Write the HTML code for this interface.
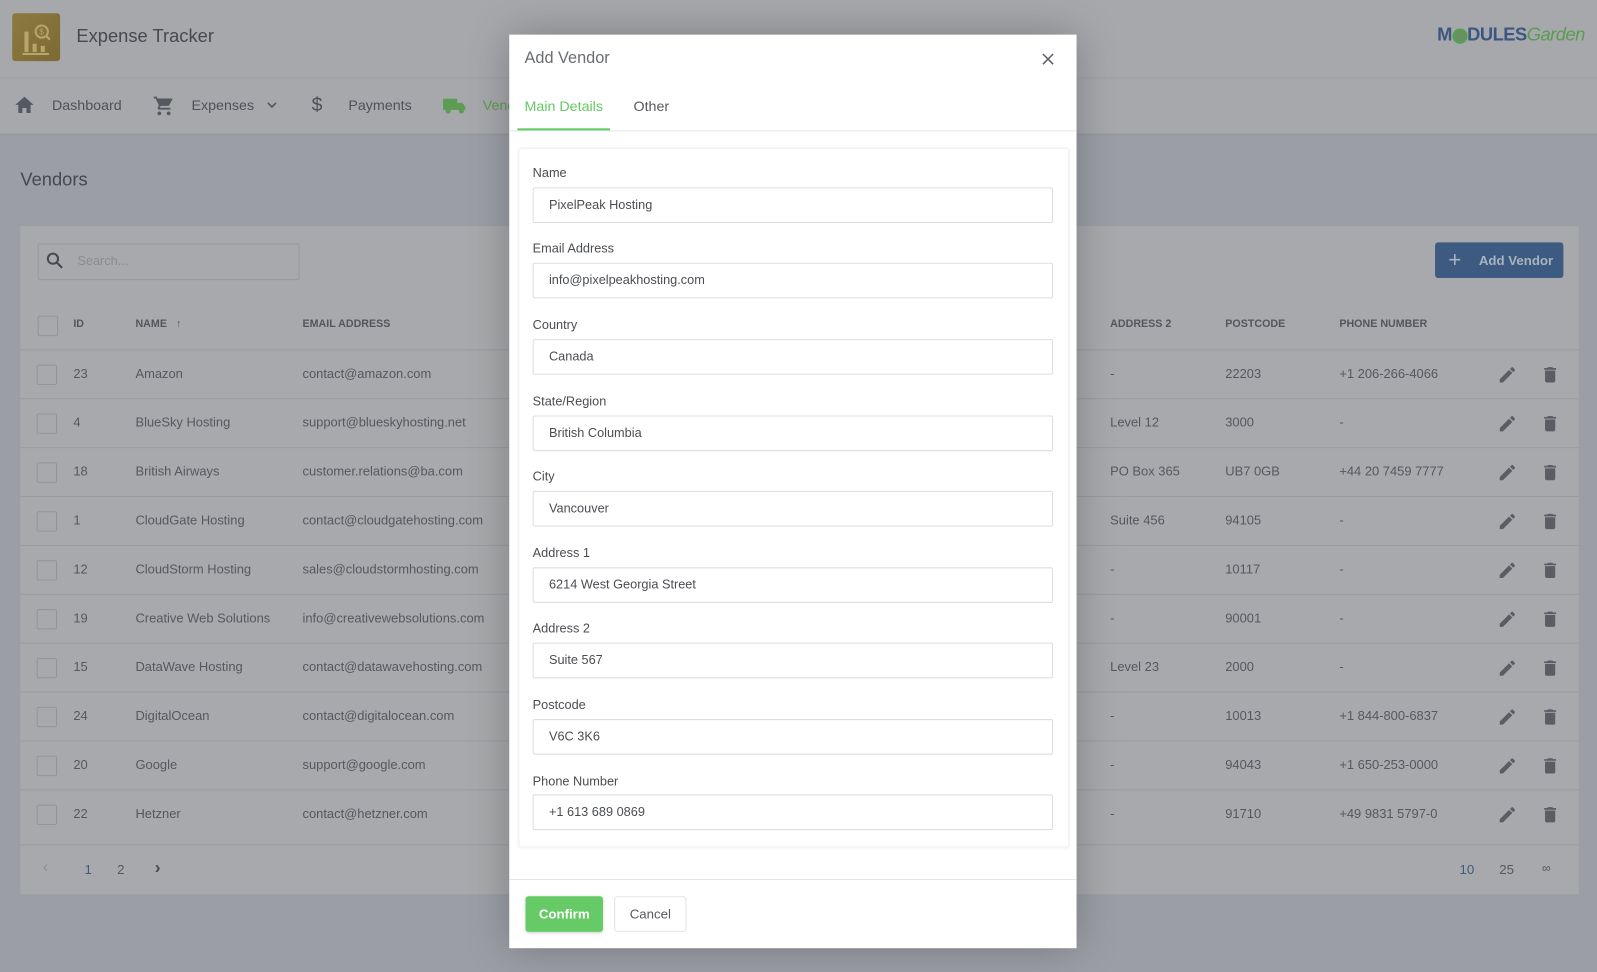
<!DOCTYPE html>
<html><head><meta charset="utf-8"><style>
html,body{margin:0;padding:0;width:1597px;height:972px;overflow:hidden;background:#9c9ea6;font-family:"Liberation Sans",sans-serif;}
#w{position:absolute;left:0;top:0;width:1568px;height:954px;transform:scale(1.01849);transform-origin:0 0;background:#9c9ea6;color:#55585e;}
.a{position:absolute;}
.hdr{left:0;top:0;width:1568px;height:131px;background:#a7a8ac;}
.nav span{position:absolute;top:95px;font-size:14px;color:#4e5157;}
.card{left:20px;top:222px;width:1530px;height:656px;background:#a8a9ac;}
.th{position:absolute;top:312px;font-size:10.5px;font-weight:bold;color:#53565c;}
.row{position:absolute;left:20px;width:1530px;height:48px;border-top:1px solid #9b9ca0;}
.row span{position:absolute;top:16px;font-size:12.7px;color:#55585e;}
.cb{position:absolute;left:16px;width:18px;height:18px;border:1px solid #93959a;border-radius:2px;}
.m{left:500px;top:34px;width:557px;height:897px;background:#fff;box-shadow:0 0 40px rgba(0,0,0,.25);}
.lbl{position:absolute;left:13px;font-size:12.5px;color:#4a4d52;}
.inp{position:absolute;left:13px;width:494px;height:33px;border:1px solid #dcdde3;border-radius:2px;font-size:12.5px;color:#4a4d52;line-height:33px;padding-left:15px;box-sizing:content-box;}
</style></head><body><div id="w">
<div class="a hdr"></div>
<div class="a" style="left:0;top:76px;width:1568px;height:1px;background:#9fa0a4"></div>
<div class="a" style="left:0;top:131px;width:1568px;height:2px;background:#999ba2"></div>
<div class="a" style="left:12px;top:13px;width:47px;height:47px;border-radius:3px;background:linear-gradient(135deg,#8d7a3e,#7c6a35)">
<svg width="47" height="47" viewBox="0 0 47 47"><g fill="none" stroke="#b9a56a" stroke-width="2"><circle cx="29" cy="18" r="6"/><path d="M33 22l4 4M10 40h26"/></g><g fill="#b9a56a"><rect x="12" y="18" width="4" height="20"/><rect x="20" y="30" width="4" height="8"/><rect x="28" y="32" width="4" height="6"/></g><text x="26.5" y="21" font-size="8" fill="#b9a56a" font-family="Liberation Sans">$</text></svg></div>
<div class="a" style="left:75px;top:25px;font-size:18px;color:#46494f">Expense Tracker</div>
<div class="a" style="left:1411px;top:24px;font-size:18px;font-weight:bold;color:#3b5781;letter-spacing:-0.5px">M<span style="display:inline-block;width:15px;height:15px;border:3px solid #5a9c52;border-radius:50%;vertical-align:-3px;box-sizing:border-box;background:#6b8f65"></span>DULES<span style="font-weight:normal;color:#5a9c52;font-style:italic">Garden</span></div>
<div class="nav">
<svg class="a" style="left:14px;top:94px" width="20" height="18" viewBox="0 0 20 18"><path d="M10 1L1 9h3v8h4v-5h4v5h4V9h3z" fill="#55585e"/></svg>
<span style="left:51px">Dashboard</span>
<svg class="a" style="left:150px;top:93px" width="22" height="22" viewBox="0 0 24 24"><path d="M7 18a2 2 0 100 4 2 2 0 000-4zM1 2v2h2l3.6 7.6-1.4 2.4C5 15 5.8 16 7 16h12v-2H7.4l1.1-2h7.5c.8 0 1.4-.4 1.7-1l3.6-6.5L19.6 4H5.2L4.3 2zm16 16a2 2 0 100 4 2 2 0 000-4z" fill="#55585e"/></svg>
<span style="left:188px">Expenses</span>
<svg class="a" style="left:261px;top:99px" width="12" height="8" viewBox="0 0 12 8"><path d="M2 2l4 4 4-4" stroke="#55585e" stroke-width="1.6" fill="none"/></svg>
<span style="left:306px;font-size:19px;top:93px">$</span>
<span style="left:342px">Payments</span>
<svg class="a" style="left:434px;top:95px" width="24" height="18" viewBox="0 0 24 18"><path d="M1 2h14v11H1zM15 6h5l3 4v3h-8z" fill="#5e9c56"/><circle cx="6" cy="14" r="2.5" fill="#5e9c56"/><circle cx="19" cy="14" r="2.5" fill="#5e9c56"/></svg>
<span style="left:474px;color:#5e9c56">Vendors</span>
</div>
<div class="a" style="left:20px;top:166px;font-size:18px;color:#46494f">Vendors</div>
<div class="a card"></div>
<div class="a" style="left:37px;top:239px;width:255px;height:34px;border:1px solid #97999e;border-radius:2px"></div>
<svg class="a" style="left:45px;top:247px" width="18" height="18" viewBox="0 0 18 18"><circle cx="7" cy="7" r="5" stroke="#46494f" stroke-width="2" fill="none"/><path d="M11 11l5 5" stroke="#46494f" stroke-width="2"/></svg>
<div class="a" style="left:76px;top:249px;font-size:12.5px;color:#8a8c91">Search...</div>
<div class="a" style="left:1409px;top:238px;width:126px;height:35px;background:#3d5b80;border-radius:3px;color:#a9b3c0;font-size:13px;font-weight:bold;line-height:35px"><span style="position:absolute;left:13px;font-size:22px;font-weight:normal;top:-1px">+</span><span style="position:absolute;left:43px">Add Vendor</span></div>
<div class="cb" style="left:37px;top:310px"></div>
<span class="th" style="left:72px">ID</span><span class="th" style="left:133px">NAME &nbsp;&nbsp;↑</span><span class="th" style="left:297px">EMAIL ADDRESS</span><span class="th" style="left:1090px">ADDRESS 2</span><span class="th" style="left:1203px">POSTCODE</span><span class="th" style="left:1315px">PHONE NUMBER</span>
<div id="rows"></div>
<div class="row" style="top:829px;height:49px"></div>
<div class="a" style="left:42px;top:843px;font-size:16px;color:#8e9095">‹</div>
<div class="a" style="left:83px;top:846px;font-size:13px;color:#3f5a80">1</div>
<div class="a" style="left:115px;top:846px;font-size:13px;color:#55585e">2</div>
<div class="a" style="left:152px;top:842px;font-size:17px;color:#46494f;font-weight:bold">›</div>
<div class="a" style="left:1433px;top:846px;font-size:13px;color:#3f5a80">10</div>
<div class="a" style="left:1472px;top:846px;font-size:13px;color:#55585e">25</div>
<div class="a" style="left:1514px;top:845px;font-size:12px;color:#55585e">∞</div>

<div class="a m">
<div class="a" style="left:15px;top:15px;font-size:16px;color:#6a6d73">Add Vendor</div>
<svg class="a" style="left:523px;top:18px" width="12" height="12" viewBox="0 0 12 12"><path d="M1 1l10 10M11 1L1 11" stroke="#5a5d63" stroke-width="1.5"/></svg>
<div class="a" style="left:15px;top:62px;font-size:14px;color:#63c963">Main Details</div>
<div class="a" style="left:122px;top:62px;font-size:14px;color:#55585e">Other</div>
<div class="a" style="left:0;top:94px;width:557px;height:1px;background:#e4e5ea"></div>
<div class="a" style="left:8px;top:92px;width:91px;height:2px;background:#63c963"></div>
<div class="a" style="left:9px;top:111px;width:539px;height:685px;border:1px solid #eceef2;border-radius:3px;box-shadow:0 1px 3px rgba(0,0,0,.06)">
<div class="lbl" style="top:17px">Name</div><div class="inp" style="top:38px">PixelPeak Hosting</div>
<div class="lbl" style="top:91px">Email Address</div><div class="inp" style="top:112px">info@pixelpeakhosting.com</div>
<div class="lbl" style="top:166px">Country</div><div class="inp" style="top:187px">Canada</div>
<div class="lbl" style="top:241px">State/Region</div><div class="inp" style="top:262px">British Columbia</div>
<div class="lbl" style="top:315px">City</div><div class="inp" style="top:336px">Vancouver</div>
<div class="lbl" style="top:390px">Address 1</div><div class="inp" style="top:411px">6214 West Georgia Street</div>
<div class="lbl" style="top:464px">Address 2</div><div class="inp" style="top:485px">Suite 567</div>
<div class="lbl" style="top:539px">Postcode</div><div class="inp" style="top:560px">V6C 3K6</div>
<div class="lbl" style="top:614px">Phone Number</div><div class="inp" style="top:634px">+1 613 689 0869</div>
</div>
<div class="a" style="left:0;top:829px;width:557px;height:1px;background:#e4e5ea"></div>
<div class="a" style="left:16px;top:846px;width:76px;height:35px;background:#66cb66;border-radius:3px;color:#fff;font-size:13px;font-weight:bold;text-align:center;line-height:35px;box-shadow:0 1px 3px rgba(0,0,0,.2)">Confirm</div>
<div class="a" style="left:103px;top:846px;width:69px;height:33px;border:1px solid #e2e3e8;border-radius:3px;color:#55585e;font-size:13px;text-align:center;line-height:33px">Cancel</div>
</div>
</div>
<script>
var d=[["23","Amazon","contact@amazon.com","-","22203","+1 206-266-4066"],["4","BlueSky Hosting","support@blueskyhosting.net","Level 12","3000","-"],["18","British Airways","customer.relations@ba.com","PO Box 365","UB7 0GB","+44 20 7459 7777"],["1","CloudGate Hosting","contact@cloudgatehosting.com","Suite 456","94105","-"],["12","CloudStorm Hosting","sales@cloudstormhosting.com","-","10117","-"],["19","Creative Web Solutions","info@creativewebsolutions.com","-","90001","-"],["15","DataWave Hosting","contact@datawavehosting.com","Level 23","2000","-"],["24","DigitalOcean","contact@digitalocean.com","-","10013","+1 844-800-6837"],["20","Google","support@google.com","-","94043","+1 650-253-0000"],["22","Hetzner","contact@hetzner.com","-","91710","+49 9831 5797-0"]];
var h="";d.forEach(function(r,i){var t=343+i*48;h+='<div class="row" style="top:'+t+'px"><div class="cb" style="top:14px"></div><span style="left:52px">'+r[0]+'</span><span style="left:113px">'+r[1]+'</span><span style="left:277px">'+r[2]+'</span><span style="left:1070px">'+r[3]+'</span><span style="left:1183px">'+r[4]+'</span><span style="left:1295px">'+r[5]+'</span>'+
'<svg style="position:absolute;left:1450px;top:14px" width="20" height="20" viewBox="0 0 24 24"><path d="M3 17.25V21h3.75L17.8 9.94l-3.75-3.75zM20.7 7.04a1 1 0 000-1.41l-2.34-2.34a1 1 0 00-1.41 0l-1.83 1.83 3.75 3.75z" fill="#5a5d63"/></svg>'+
'<svg style="position:absolute;left:1492px;top:14px" width="20" height="20" viewBox="0 0 24 24"><path d="M6 19c0 1.1.9 2 2 2h8c1.1 0 2-.9 2-2V7H6zM19 4h-3.5l-1-1h-5l-1 1H5v2h14z" fill="#5a5d63"/></svg></div>';});
document.getElementById("rows").innerHTML=h;
</script>
</body></html>
